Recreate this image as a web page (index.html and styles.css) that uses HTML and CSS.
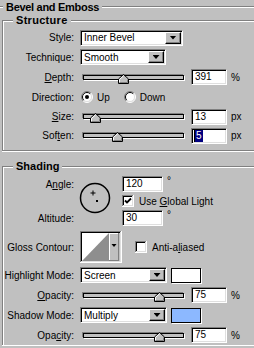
FILE: index.html
```html
<!DOCTYPE html>
<html lang="en">
<head>
    <meta charset="UTF-8">
    <meta name="viewport" content="width=device-width, initial-scale=1.0">
    <title>Bevel and Emboss</title>
    <link rel="stylesheet" href="styles.css">
</head>
<body>
    <div class="panel">
        <div class="panel-head">
            <span class="etch etch-short"></span>
            <h1>Bevel and Emboss</h1>
            <span class="etch"></span>
        </div>

        <fieldset class="group">
            <legend class="legend-structure">Structure</legend>

            <div class="row h19">
                <span class="label">Style:</span>
                <div class="select w-style"><span class="value">Inner Bevel</span><span class="drop"></span></div>
            </div>

            <div class="row">
                <span class="label">Technique:</span>
                <div class="select w-tech"><span class="value">Smooth</span><span class="drop"></span></div>
            </div>

            <div class="row">
                <span class="label"><u>D</u>epth:</span>
                <div class="slider">
                    <svg class="thumb" style="left:34px" width="11" height="10" viewBox="0 0 11 10">
                        <path d="M0.5 9.5V5L5.5 0.5 10.5 5v4.5z" fill="#c0c0c0" stroke="#000"/>
                        <path d="M1.5 8.5V5.4L5.5 1.9" fill="none" stroke="#fff"/>
                        <path d="M1.5 8.5h8V5.4" fill="none" stroke="#808080"/>
                    </svg>
                </div>
                <div class="field">391</div>
                <span class="unit">%</span>
            </div>

            <div class="row">
                <span class="label">Direction:</span>
                <svg class="radio" width="12" height="12" viewBox="0 0 12 12">
                    <circle cx="6" cy="6" r="5" fill="#fff"/>
                    <path d="M2.1 9.9A5.5 5.5 0 0 1 9.9 2.1" fill="none" stroke="#808080"/>
                    <path d="M9.9 2.1A5.5 5.5 0 0 1 2.1 9.9" fill="none" stroke="#fff"/>
                    <path d="M2.8 9.2A4.5 4.5 0 0 1 9.2 2.8" fill="none" stroke="#000"/>
                    <path d="M9.2 2.8A4.5 4.5 0 0 1 2.8 9.2" fill="none" stroke="#dfdfdf"/>
                    <circle cx="6" cy="6" r="2" fill="#000"/>
                </svg>
                <span class="opt">Up</span>
                <svg class="radio radio-second" width="12" height="12" viewBox="0 0 12 12">
                    <circle cx="6" cy="6" r="5" fill="#fff"/>
                    <path d="M2.1 9.9A5.5 5.5 0 0 1 9.9 2.1" fill="none" stroke="#808080"/>
                    <path d="M9.9 2.1A5.5 5.5 0 0 1 2.1 9.9" fill="none" stroke="#fff"/>
                    <path d="M2.8 9.2A4.5 4.5 0 0 1 9.2 2.8" fill="none" stroke="#000"/>
                    <path d="M9.2 2.8A4.5 4.5 0 0 1 2.8 9.2" fill="none" stroke="#dfdfdf"/>
                </svg>
                <span class="opt">Down</span>
            </div>

            <div class="row h19">
                <span class="label"><u>S</u>ize:</span>
                <div class="slider">
                    <svg class="thumb" style="left:6px" width="11" height="10" viewBox="0 0 11 10">
                        <path d="M0.5 9.5V5L5.5 0.5 10.5 5v4.5z" fill="#c0c0c0" stroke="#000"/>
                        <path d="M1.5 8.5V5.4L5.5 1.9" fill="none" stroke="#fff"/>
                        <path d="M1.5 8.5h8V5.4" fill="none" stroke="#808080"/>
                    </svg>
                </div>
                <div class="field">13</div>
                <span class="unit">px</span>
            </div>

            <div class="row h19">
                <span class="label">Sof<u>t</u>en:</span>
                <div class="slider">
                    <svg class="thumb" style="left:28px" width="11" height="10" viewBox="0 0 11 10">
                        <path d="M0.5 9.5V5L5.5 0.5 10.5 5v4.5z" fill="#c0c0c0" stroke="#000"/>
                        <path d="M1.5 8.5V5.4L5.5 1.9" fill="none" stroke="#fff"/>
                        <path d="M1.5 8.5h8V5.4" fill="none" stroke="#808080"/>
                    </svg>
                </div>
                <div class="field field-edit"><span class="caret"></span><span class="picked">5</span></div>
                <span class="unit">px</span>
            </div>
        </fieldset>

        <fieldset class="group group-shading">
            <legend>Shading</legend>

            <div class="angle">
                <span class="label">A<u>n</u>gle:</span>
                <svg class="dial" width="32" height="32" viewBox="0 0 32 32">
                    <circle cx="16" cy="16" r="14.5" fill="none" stroke="#000" stroke-width="1.5"/>
                    <path d="M14 8.5v5M11.5 11h5" stroke="#000" stroke-width="1"/>
                    <rect x="17" y="18" width="2" height="2" fill="#000"/>
                </svg>
                <div class="cell">
                    <div class="field w-angle">120</div>
                    <span class="deg">°</span>
                </div>
                <div class="cell">
                    <svg class="check" width="12" height="12" viewBox="0 0 12 12">
                        <rect width="12" height="12" fill="#fff"/>
                        <rect width="11" height="11" fill="#808080"/>
                        <rect x="1" y="1" width="10" height="10" fill="#dfdfdf"/>
                        <rect x="1" y="1" width="9" height="9" fill="#000"/>
                        <rect x="2" y="2" width="8" height="8" fill="#fff"/>
                        <polyline points="3,5.5 5,7.5 9,3.5" fill="none" stroke="#000" stroke-width="1.8"/>
                    </svg>
                    <span class="opt">Use <u>G</u>lobal Light</span>
                </div>
                <span class="label">Altitude:</span>
                <div class="cell">
                    <div class="field w-angle">30</div>
                    <span class="deg">°</span>
                </div>
            </div>

            <div class="row gloss">
                <span class="label">Gloss Contour:</span>
                <svg class="contour" width="42" height="32" viewBox="0 0 42 32" shape-rendering="crispEdges">
                    <rect width="42" height="32" fill="#fff"/>
                    <rect width="41" height="31" fill="#808080"/>
                    <rect x="1" y="1" width="40" height="30" fill="#dfdfdf"/>
                    <rect x="1" y="1" width="39" height="29" fill="#000"/>
                    <rect x="2" y="2" width="37" height="28" fill="#fff"/>
                    <polygon points="2,30 29,2 29,30" fill="#8e8e8e" shape-rendering="auto"/>
                    <rect x="29" y="2" width="11" height="28" fill="#c0c0c0"/>
                    <rect x="29" y="2" width="1" height="28" fill="#fff"/>
                    <rect x="29" y="2" width="10" height="1" fill="#fff"/>
                    <rect x="38" y="2" width="1" height="28" fill="#808080"/>
                    <rect x="29" y="29" width="10" height="1" fill="#808080"/>
                    <polygon points="31.5,13 36.5,13 34,16" fill="#000" shape-rendering="auto"/>
                </svg>
                <svg class="check check-gloss" width="12" height="12" viewBox="0 0 12 12">
                    <rect width="12" height="12" fill="#fff"/>
                    <rect width="11" height="11" fill="#808080"/>
                    <rect x="1" y="1" width="10" height="10" fill="#dfdfdf"/>
                    <rect x="1" y="1" width="9" height="9" fill="#000"/>
                    <rect x="2" y="2" width="8" height="8" fill="#fff"/>
                </svg>
                <span class="opt">Anti-a<u>l</u>iased</span>
            </div>

            <div class="row mode-row">
                <span class="label">Highlight Mode:</span>
                <div class="select w-mode"><span class="value">Screen</span><span class="drop"></span></div>
                <span class="swatch"></span>
            </div>

            <div class="row">
                <span class="label"><u>O</u>pacity:</span>
                <div class="slider">
                    <svg class="thumb" style="left:70px" width="11" height="10" viewBox="0 0 11 10">
                        <path d="M0.5 9.5V5L5.5 0.5 10.5 5v4.5z" fill="#c0c0c0" stroke="#000"/>
                        <path d="M1.5 8.5V5.4L5.5 1.9" fill="none" stroke="#fff"/>
                        <path d="M1.5 8.5h8V5.4" fill="none" stroke="#808080"/>
                    </svg>
                </div>
                <div class="field">75</div>
                <span class="unit">%</span>
            </div>

            <div class="row">
                <span class="label">Shadow Mode:</span>
                <div class="select w-mode"><span class="value">Multiply</span><span class="drop"></span></div>
                <span class="swatch" style="background:#8cb8ff"></span>
            </div>

            <div class="row">
                <span class="label">Opa<u>c</u>ity:</span>
                <div class="slider">
                    <svg class="thumb" style="left:70px" width="11" height="10" viewBox="0 0 11 10">
                        <path d="M0.5 9.5V5L5.5 0.5 10.5 5v4.5z" fill="#c0c0c0" stroke="#000"/>
                        <path d="M1.5 8.5V5.4L5.5 1.9" fill="none" stroke="#fff"/>
                        <path d="M1.5 8.5h8V5.4" fill="none" stroke="#808080"/>
                    </svg>
                </div>
                <div class="field">75</div>
                <span class="unit">%</span>
            </div>
        </fieldset>
    </div>
</body>
</html>
```

FILE: styles.css
```css
* {
    box-sizing: border-box;
}

body {
    margin: 0;
    width: 254px;
    height: 348px;
    overflow: hidden;
    background: #c0c0c0;
    color: #000;
    font-family: "Liberation Sans", Arial, sans-serif;
    font-size: 10px;
}

u {
    text-underline-offset: 1px;
}

/* the dialog is cut off on the right and at the bottom */
.panel {
    width: 254px;
}

.panel-head {
    display: flex;
    align-items: center;
    height: 14px;
}

h1 {
    margin: 0;
    padding: 0 3px;
    font-size: 11px;
    font-weight: bold;
    line-height: 14px;
    letter-spacing: -0.3px;
}

.etch {
    flex: 1;
    height: 2px;
    border-top: 1px solid #808080;
    border-bottom: 1px solid #fff;
}

.etch-short {
    flex: 0 0 3px;
}

.group {
    margin: 0 0 0 2px;
    padding: 2px 0 5px 0;
    min-width: 0;
    border: 1px solid #808080;
    border-right: 0;
    box-shadow: inset 1px 1px 0 #fff, 0 1px 0 #fff;
}

.group-shading {
    margin-top: 9px;
    padding-top: 4px;
    padding-bottom: 0;
    border-bottom: 0;
}

legend {
    margin-left: 10px;
    padding: 0 3px;
    font-size: 11px;
    font-weight: bold;
    line-height: 12px;
    background: #c0c0c0;
}

.legend-structure {
    letter-spacing: 0.3px;
}

.row {
    display: flex;
    align-items: center;
    height: 20px;
}

.row.h19 {
    height: 19px;
}

.label {
    flex: 0 0 71px;
    margin-right: 6px;
    text-align: right;
    white-space: nowrap;
}

/* sunken win95 box */
.select,
.field {
    height: 16px;
    background: #fff;
    border: 1px solid;
    border-color: #808080 #fff #fff #808080;
    box-shadow: inset 1px 1px 0 #000, inset -1px -1px 0 #dfdfdf;
}

.select {
    display: flex;
    align-items: center;
    padding: 1px 1px 1px 3px;
}

.select .value {
    flex: 1;
}

.w-style { width: 103px; }
.w-tech { width: 86px; }
.w-mode { width: 87px; }

.drop {
    display: flex;
    align-items: center;
    justify-content: center;
    width: 16px;
    height: 12px;
    background: #c0c0c0;
    border: 1px solid;
    border-color: #fff #000 #000 #fff;
    box-shadow: inset -1px -1px 0 #808080;
}

.drop::after {
    content: "";
    width: 7px;
    height: 4px;
    background: #000;
    clip-path: polygon(0 0, 100% 0, 50% 100%);
}

.field {
    width: 36px;
    padding: 0 3px;
    line-height: 14px;
    white-space: nowrap;
}

.field-edit {
    display: flex;
    align-items: center;
    padding-left: 2px;
}

.caret {
    width: 1px;
    height: 12px;
    background: #000;
}

.picked {
    height: 12px;
    padding: 0 1px;
    line-height: 12px;
    background: #000080;
    color: #fff;
}

.unit {
    margin-left: 4px;
}

.slider {
    position: relative;
    flex: 0 0 101px;
    height: 5px;
    margin: 0 7px 0 3px;
    background: #c0c0c0;
    border: 1px solid #000;
    box-shadow: -1px -1px 0 #808080, 1px 1px 0 #fff;
}

.thumb {
    position: absolute;
    top: -2px;
}

.radio {
    margin-left: 1px;
}

.radio-second {
    margin-left: 14px;
}

.opt {
    margin-left: 4px;
    white-space: nowrap;
}

/* angle / altitude block */
.angle {
    display: grid;
    grid-template-columns: 77px 42px auto;
    grid-template-rows: 16px 16px 16px;
    row-gap: 1px;
    align-items: center;
}

.angle .label {
    grid-column: 1;
    padding-right: 6px;
    margin-right: 0;
}

.angle .label:last-of-type {
    grid-row: 3;
}

.dial {
    grid-column: 2;
    grid-row: 1 / 4;
    align-self: start;
    margin: 6px 0 0 -1px;
}

.cell {
    grid-column: 3;
    display: flex;
    align-items: center;
    height: 16px;
}

.w-angle {
    width: 41px;
}

.deg {
    align-self: flex-start;
    margin-left: 4px;
    line-height: 10px;
}

.cell .opt {
    margin-left: 5px;
}

.gloss {
    height: 32px;
    margin-top: 5px;
}

.check-gloss {
    margin-left: 13px;
}

.gloss .opt {
    margin-left: 5px;
}

.mode-row {
    margin-top: 2px;
}

.swatch {
    width: 30px;
    height: 15px;
    margin-left: 4px;
    background: #fff;
    border: 1px solid #000;
    box-shadow: 1px 1px 0 #fff;
}
```
